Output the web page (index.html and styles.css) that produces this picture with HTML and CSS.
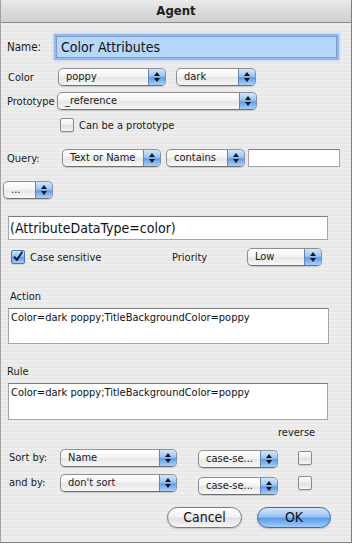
FILE: index.html
```html
<!DOCTYPE html>
<html lang="en">
<head>
  <meta charset="UTF-8" />
  <meta name="viewport" content="width=device-width, initial-scale=1" />
  <title>Agent</title>
  <link rel="stylesheet" href="styles.css">
</head>
<body>
  <div class="window">
    <!-- Title bar -->
    <div class="titlebar">Agent</div>

    <div class="content">
      <!-- Name -->
      <div class="row row-name">
        <span class="label lbl-name">Name:</span>
        <div class="field field-name">Color Attributes</div>
      </div>

      <!-- Color -->
      <div class="row row-color">
        <span class="label lbl-color">Color</span>
        <div class="popup w-poppy"><span class="popup-text">poppy</span><span class="cap"></span></div>
        <div class="popup w-dark"><span class="popup-text">dark</span><span class="cap"></span></div>
      </div>

      <!-- Prototype -->
      <div class="row row-proto">
        <span class="label lbl-proto">Prototype</span>
        <div class="popup w-proto"><span class="popup-text">_reference</span><span class="cap"></span></div>
      </div>

      <div class="row row-canbe">
        <span class="checkbox"></span>
        <span class="check-text">Can be a prototype</span>
      </div>

      <!-- Query -->
      <div class="row row-query">
        <span class="label lbl-query">Query:</span>
        <div class="popup w-textname"><span class="popup-text">Text or Name</span><span class="cap"></span></div>
        <div class="popup w-contains"><span class="popup-text">contains</span><span class="cap"></span></div>
        <div class="small-field"></div>
      </div>

      <div class="row row-dots">
        <div class="popup w-dots"><span class="popup-text">...</span><span class="cap"></span></div>
      </div>

      <div class="row row-qfield">
        <div class="field-plain">(AttributeDataType=color)</div>
      </div>

      <div class="row row-case">
        <span class="checkbox checked">
          <svg width="14" height="14" viewBox="0 0 14 14"><path d="M3 7.2 L5.8 10.6 L11.6 1.4" fill="none" stroke="#10213b" stroke-width="2.2" stroke-linecap="round" stroke-linejoin="round"/></svg>
        </span>
        <span class="check-text case-text">Case sensitive</span>
        <span class="label lbl-priority">Priority</span>
        <div class="popup w-low"><span class="popup-text">Low</span><span class="cap"></span></div>
      </div>

      <!-- Action -->
      <div class="row row-action-label"><span class="label lbl-action">Action</span></div>
      <div class="row row-action">
        <div class="textarea ta-action">Color=dark poppy;TitleBackgroundColor=poppy</div>
      </div>

      <!-- Rule -->
      <div class="row row-rule-label"><span class="label lbl-rule">Rule</span></div>
      <div class="row row-rule">
        <div class="textarea ta-rule">Color=dark poppy;TitleBackgroundColor=poppy</div>
      </div>

      <!-- Sorting -->
      <div class="row row-reverse"><span class="label lbl-reverse">reverse</span></div>

      <div class="row row-sort">
        <span class="label lbl-sort">Sort by:</span>
        <div class="popup w-sortname"><span class="popup-text">Name</span><span class="cap"></span></div>
        <div class="popup w-case"><span class="popup-text">case-se...</span><span class="cap"></span></div>
        <span class="checkbox rev-box"></span>
      </div>

      <div class="row row-and">
        <span class="label lbl-sort">and by:</span>
        <div class="popup w-sortname"><span class="popup-text">don't sort</span><span class="cap"></span></div>
        <div class="popup w-case case-low"><span class="popup-text">case-se...</span><span class="cap"></span></div>
        <span class="checkbox rev-box"></span>
      </div>

      <!-- Buttons -->
      <div class="row row-buttons">
        <div class="button btn-cancel">Cancel</div>
        <div class="button btn-ok">OK</div>
      </div>
    </div>
  </div>
</body>
</html>
```

FILE: styles.css
```css
/* Window */
body {
  margin: 0;
  padding: 0;
  background: #ffffff;
  font-family: "DejaVu Sans Condensed", "DejaVu Sans", sans-serif;
  font-stretch: condensed;
  color: #1a1a1a;
}

.window {
  width: 350px;
  height: 542px;
  border-left: 1px solid #a3a3a3;
  border-right: 1px solid #7f7f7f;
  border-bottom: 1px solid #7f7f7f;
  background: repeating-linear-gradient(#ededed 0 2px, #e8e8e8 2px 4px);
  overflow: hidden;
}

.titlebar {
  height: 22px;
  line-height: 22px;
  text-align: center;
  font-size: 13px;
  font-weight: 700;
  color: #202020;
  background: linear-gradient(#eaeaea, #dcdcdc 50%, #cfcfcf);
  border-bottom: 1px solid #8c8c8c;
}

.content {
  display: flex;
  flex-direction: column;
}

.row {
  display: flex;
  align-items: center;
}

.label {
  font-size: 11px;
  color: #1a1a1a;
  white-space: nowrap;
}

/* Name */
.row-name { margin-top: 13px; height: 22px; }
.lbl-name { padding-left: 6px; width: 49px; font-size: 11.5px; }

.field {
  box-sizing: border-box;
  height: 22px;
  background: #b7d6fb;
  border: 1px solid #7b9cc6;
  box-shadow: 0 0 0 2px #92b9e9, 0 0 2px 3px #bfd6f0;
  font-size: 14px;
  line-height: 20px;
  padding-left: 4px;
  color: #111111;
}
.field-name { width: 281px; }

/* Popup buttons */
.popup {
  box-sizing: border-box;
  height: 18px;
  display: flex;
  border: 1px solid #8f8f8f;
  border-bottom-color: #6f6f6f;
  border-radius: 5px;
  background: linear-gradient(#ffffff, #f4f4f4 45%, #e6e6e6 55%, #f8f8f8);
  box-shadow: 0 1px 1px rgba(0, 0, 0, 0.15);
  overflow: hidden;
}

.popup-text {
  flex: 1;
  font-size: 11px;
  line-height: 16px;
  padding-left: 7px;
  white-space: nowrap;
  overflow: hidden;
}

.cap {
  position: relative;
  width: 16px;
  border-left: 1px solid #5f87bd;
  background: linear-gradient(#d3e5fb, #9cc4f3 45%, #5d9de9 55%, #a9d1fb);
}

.cap::before,
.cap::after {
  content: "";
  position: absolute;
  left: 5px;
  border-left: 3px solid transparent;
  border-right: 3px solid transparent;
}
.cap::before { top: 3px; border-bottom: 4px solid #151515; }
.cap::after { top: 9px; border-top: 4px solid #151515; }

/* Color / Prototype */
.row-color { margin-top: 10px; height: 18px; }
.lbl-color { padding-left: 7px; width: 50px; }
.w-poppy { width: 108px; }
.w-dark { width: 80px; margin-left: 10px; }

.row-proto { margin-top: 6px; height: 18px; }
.lbl-proto { padding-left: 6px; width: 50px; }
.w-proto { width: 200px; }

/* Checkboxes */
.checkbox {
  box-sizing: border-box;
  width: 14px;
  height: 14px;
  border: 1px solid #8a8a8a;
  border-radius: 2px;
  background: linear-gradient(#fdfdfd, #ececec 50%, #e0e0e0 55%, #f6f6f6);
  box-shadow: 0 1px 1px rgba(0, 0, 0, 0.12);
  display: flex;
}

.checkbox.checked {
  border-color: #4d76ad;
  background: linear-gradient(#cfe3fb, #8fbef2 45%, #5a99e6 55%, #a2cdfa);
}

.checkbox svg { margin: -1px 0 0 0; }

.check-text {
  font-size: 11px;
  margin-left: 5px;
}

.row-canbe { margin-top: 8px; height: 14px; padding-left: 59px; }

/* Query */
.row-query { margin-top: 17px; height: 18px; }
.lbl-query { padding-left: 6px; width: 55px; }
.w-textname { width: 99px; }
.w-contains { width: 79px; margin-left: 5px; }

.small-field {
  box-sizing: border-box;
  width: 92px;
  height: 18px;
  margin-left: 3px;
  background: #ffffff;
  border: 1px solid #a5a5a5;
  border-top-color: #7d7d7d;
}

.row-dots { margin-top: 14px; height: 18px; padding-left: 2px; }
.w-dots { width: 50px; }

.row-qfield { margin-top: 17px; height: 24px; padding-left: 7px; }

.field-plain {
  box-sizing: border-box;
  width: 320px;
  height: 24px;
  background: #ffffff;
  border: 1px solid #a5a5a5;
  border-top-color: #7d7d7d;
  font-size: 14px;
  line-height: 22px;
  padding-left: 1px;
  color: #111111;
}

/* Case sensitive / Priority */
.row-case { margin-top: 8px; height: 18px; padding-left: 10px; }
.case-text { width: 142px; }
.lbl-priority { width: 75px; }
.w-low { width: 75px; }

/* Action / Rule */
.row-action-label { margin-top: 23px; height: 14px; padding-left: 9px; }
.row-action { margin-top: 5px; padding-left: 7px; }
.row-rule-label { margin-top: 20px; height: 14px; padding-left: 6px; }
.row-rule { margin-top: 5px; padding-left: 7px; }

.textarea {
  box-sizing: border-box;
  background: #ffffff;
  border: 1px solid #a5a5a5;
  border-top-color: #7d7d7d;
  font-size: 11px;
  line-height: 14px;
  padding: 2px 3px 2px 2px;
  color: #111111;
  white-space: nowrap;
}
.ta-action { width: 321px; height: 36px; }
.ta-rule { width: 320px; height: 37px; }

/* Sorting */
.row-reverse { margin-top: 5px; height: 14px; padding-left: 277px; }

.row-sort,
.row-and {
  align-items: flex-start;
  height: 21px;
}
.row-sort { margin-top: 10px; }
.row-and { margin-top: 4px; }

.lbl-sort { padding-left: 8px; width: 51px; line-height: 18px; }
.w-sortname { width: 117px; }
.w-case { width: 80px; margin-left: 21px; margin-top: 1px; }
.case-low { margin-top: 3px; }
.rev-box { margin-left: 20px; margin-top: 2px; }

/* Buttons */
.row-buttons { margin-top: 12px; padding-left: 166px; }

.button {
  box-sizing: border-box;
  height: 21px;
  border-radius: 11px;
  border: 1px solid #7a7a7a;
  font-size: 14px;
  line-height: 19px;
  text-align: center;
  color: #111111;
  box-shadow: 0 1px 2px rgba(0, 0, 0, 0.2);
}

.btn-cancel {
  width: 75px;
  background: linear-gradient(#ffffff, #f2f2f2 45%, #e0e0e0 55%, #f7f7f7);
}

.btn-ok {
  width: 74px;
  margin-left: 15px;
  border-color: #3f6aa6;
  background: linear-gradient(#d5e7fc, #98c3f3 45%, #5b9be8 55%, #9fcdfb);
}
```
